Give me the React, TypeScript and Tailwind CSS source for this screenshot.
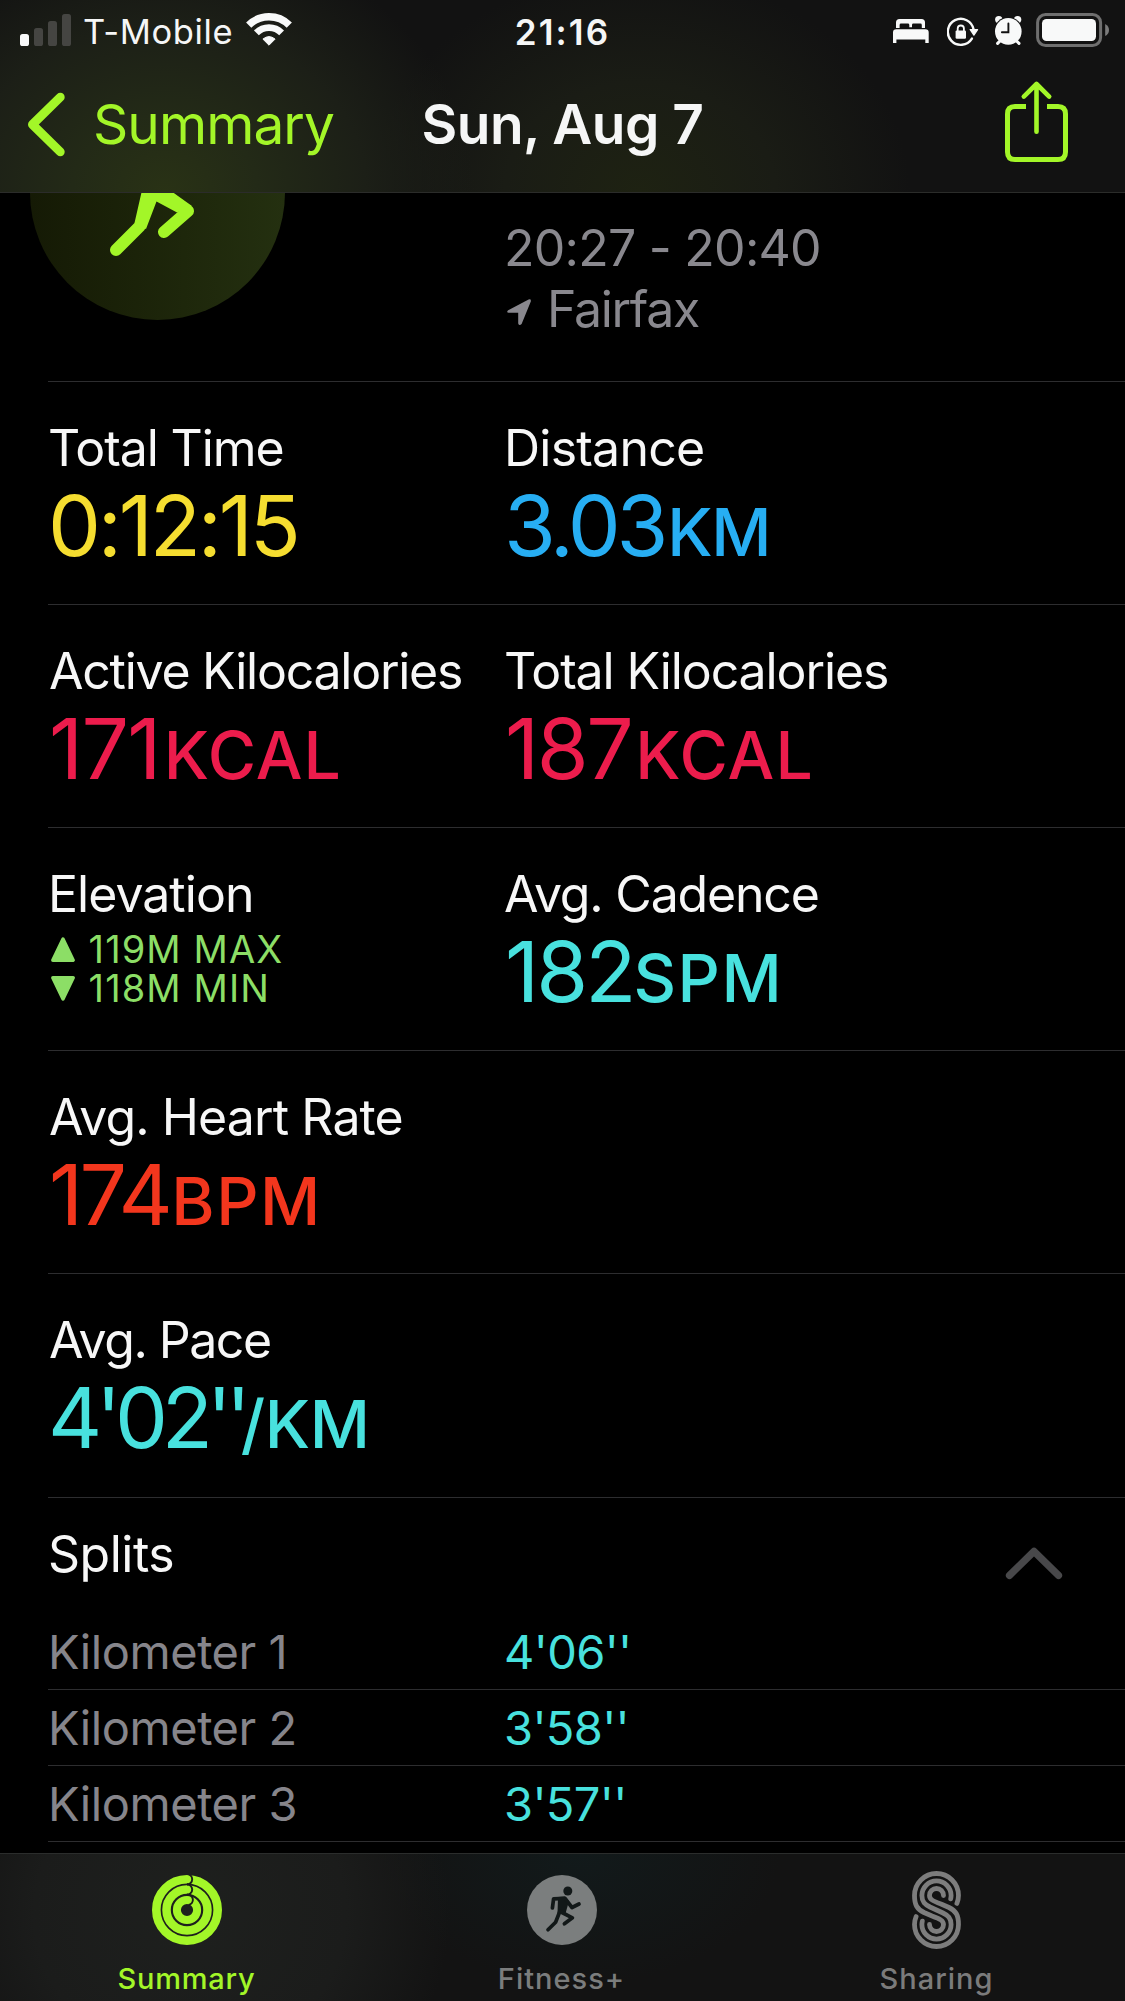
import type { ReactNode } from "react";

interface Metric {
  label: string;
  labelClass: string;
  value: string;
  valueClass: string;
  unit?: string;
  unitClass?: string;
  color: string;
}

const totalTime: Metric = {
  label: "Total Time",
  labelClass: "tracking-[-1.1px] -ml-px",
  value: "0:12:15",
  valueClass: "tracking-[-3.2px] -ml-px",
  color: "text-[#f5dd30]",
};

const distance: Metric = {
  label: "Distance",
  labelClass: "tracking-[-0.77px]",
  value: "3.03",
  valueClass: "tracking-[-4.2px]",
  unit: "KM",
  unitClass: "tracking-[-1.2px] ml-[3px]",
  color: "text-[#27aef3]",
};

const activeKcal: Metric = {
  label: "Active Kilocalories",
  labelClass: "tracking-[-1.25px]",
  value: "171",
  valueClass: "tracking-[-1.7px]",
  unit: "KCAL",
  unitClass: "tracking-[0.95px] ml-1",
  color: "text-[#ec1c4c]",
};

const totalKcal: Metric = {
  label: "Total Kilocalories",
  labelClass: "tracking-[-1.11px]",
  value: "187",
  valueClass: "tracking-[-2.5px] ml-px",
  unit: "KCAL",
  unitClass: "tracking-[1.2px] ml-1",
  color: "text-[#ec1c4c]",
};

const cadence: Metric = {
  label: "Avg. Cadence",
  labelClass: "tracking-[-1.2px]",
  value: "182",
  valueClass: "tracking-[-3px] ml-px",
  unit: "SPM",
  unitClass: "tracking-[1.6px]",
  color: "text-[#48e1de]",
};

const heartRate: Metric = {
  label: "Avg. Heart Rate",
  labelClass: "tracking-[-0.9px]",
  value: "174",
  valueClass: "tracking-[-3.6px]",
  unit: "BPM",
  unitClass: "tracking-[1.5px] ml-0.5",
  color: "text-[#f3361d]",
};

const pace: Metric = {
  label: "Avg. Pace",
  labelClass: "tracking-[-1.5px]",
  value: "4'02''",
  valueClass: "tracking-[-6.2px] -ml-px",
  unit: "/KM",
  unitClass: "tracking-[-0.4px] -ml-1",
  color: "text-[#48e1de]",
};

const splits = [
  { name: "Kilometer 1", time: "4'06''" },
  { name: "Kilometer 2", time: "3'58''" },
  { name: "Kilometer 3", time: "3'57''" },
];

function StatusBar() {
  return (
    <div className="h-[63px] grid grid-cols-[1fr_auto_1fr] items-center text-[#f5f6f6]">
      <div className="flex items-center pl-5">
        <svg className="w-[51px] h-[63px]" viewBox="20 0 51 63">
          <rect x="20" y="34" width="9" height="12" rx="2.6" fill="#f8f9f9" />
          <g fill="#454542">
            <rect x="34" y="28" width="9" height="18" rx="2.6" />
            <rect x="48" y="21" width="9" height="25" rx="2.6" />
            <rect x="62" y="14" width="9" height="32" rx="2.6" />
          </g>
        </svg>
        <span className="ml-3 text-[34.5px] leading-10 tracking-[0.6px] whitespace-nowrap">
          T-Mobile
        </span>
        <svg className="ml-[13px] w-[46px] h-[63px]" viewBox="246 0 46 63" fill="none" stroke="#f8f9f9">
          <path d="M248.7 25.1A28.8 28.8 0 0 1 289.3 25.1" strokeWidth="7.4" />
          <path d="M256.4 32.9A17.8 17.8 0 0 1 281.6 32.9" strokeWidth="6.8" />
          <path d="M269 45.2L262.9 39.1Q269 34.1 275.1 39.1Z" fill="#f8f9f9" strokeWidth="1" strokeLinejoin="round" />
        </svg>
      </div>

      <span className="text-[35px] leading-10 font-semibold tracking-[2.1px]">21:16</span>

      <div className="flex items-center justify-end pr-4">
        {/* Sleep focus */}
        <svg className="w-9 h-[63px]" viewBox="893 0 36 63" fill="#f8f9f9">
          <path d="M896 28V22.5Q896 19 899.5 19H921.5Q925 19 925 22.5V28H921.8V25Q921.8 23.6 920.4 23.6H913.4Q912 23.6 912 25V27.2H909.3V25Q909.3 23.6 907.9 23.6H901Q899.6 23.6 899.6 25V28Z" />
          <path d="M893 43V32.6Q893 29.3 896.3 29.3H925.4Q928.7 29.3 928.7 32.6V43H925.3V39.6H896.4V43Z" />
        </svg>
        {/* Rotation lock */}
        <svg className="ml-[18px] w-8 h-[63px]" viewBox="947 0 32 63">
          <path
            d="M971.9 38.6A13 13 0 1 1 973.6 29.5"
            fill="none"
            stroke="#f8f9f9"
            strokeWidth="2.4"
            strokeLinecap="round"
          />
          <path d="M970.2 29.6H977.6L973.9 35.2Z" fill="#f8f9f9" stroke="#f8f9f9" strokeWidth="1.2" strokeLinejoin="round" />
          <rect x="955.6" y="30.4" width="10.4" height="8.4" rx="1.2" fill="#f8f9f9" />
          <path d="M957.7 31.5V28.6A3.1 3.1 0 0 1 963.9 28.6V31.5" fill="none" stroke="#f8f9f9" strokeWidth="1.8" />
        </svg>
        {/* Alarm */}
        <svg className="ml-[15px] w-[29px] h-[63px]" viewBox="994 0 29 63">
          <circle cx="998.8" cy="19.6" r="3.7" fill="#f8f9f9" />
          <circle cx="1017.6" cy="19.6" r="3.7" fill="#f8f9f9" />
          <circle cx="1008.3" cy="31.4" r="14.3" fill="#121212" />
          <circle cx="1008.3" cy="31.4" r="13.3" fill="#f8f9f9" />
          <path d="M1001 40L997.6 43.4M1015.6 40L1019 43.4" stroke="#f8f9f9" strokeWidth="3" strokeLinecap="round" />
          <path d="M1008.4 23.5V32.2H1001.9" fill="none" stroke="#121212" strokeWidth="1.9" strokeLinecap="round" />
        </svg>
        {/* Battery */}
        <svg className="ml-[13px] w-[73px] h-[63px]" viewBox="1036 0 73 63">
          <rect x="1037.6" y="14.5" width="63" height="31" rx="8" fill="none" stroke="#6f6f6f" strokeWidth="3" />
          <rect x="1042" y="19" width="54" height="22" rx="4.5" fill="#f8f9f9" />
          <path d="M1105.2 24Q1109 26 1109 30T1105.2 36Z" fill="#7b7b7b" />
        </svg>
      </div>
    </div>
  );
}

function NavBar() {
  return (
    <div className="h-[122px] grid grid-cols-[1fr_auto_1fr] items-center">
      <div className="flex items-center pl-7 text-[#a3f628]">
        <svg
          className="w-[38px] h-[122px]"
          viewBox="28 63 38 122"
          fill="none"
          stroke="currentColor"
          strokeWidth="8.8"
          strokeLinecap="round"
          strokeLinejoin="round"
        >
          <path d="M60.3 97.2L32.4 124.5L60.3 151.8" />
        </svg>
        <span className="ml-[27px] text-[55px] leading-[64px] tracking-[-0.94px]">Summary</span>
      </div>

      <h1 className="text-[55px] leading-[64px] font-semibold tracking-[-0.5px] text-[#f5f6f6] whitespace-nowrap">
        Sun, Aug 7
      </h1>

      <div className="flex justify-end pr-[57px]">
        <svg
          className="w-[63px] h-[122px]"
          viewBox="1005 63 63 122"
          fill="none"
          stroke="#a3f628"
          strokeWidth="5"
        >
          <path d="M1026 106.5H1015Q1007.5 106.5 1007.5 114V152Q1007.5 159.5 1015 159.5H1058Q1065.5 159.5 1065.5 152V114Q1065.5 106.5 1058 106.5H1047" />
          <path d="M1036.5 85V131.8M1023.8 96.6L1036.5 84L1049.2 96.6" strokeWidth="4.6" strokeLinecap="round" strokeLinejoin="round" />
        </svg>
      </div>
    </div>
  );
}

function MetricCell({ metric }: { metric: Metric }) {
  return (
    <div className="whitespace-nowrap">
      <div className={`text-[50px] leading-[60px] text-[#f7f7f7] ${metric.labelClass}`}>
        {metric.label}
      </div>
      <div className={`mt-1.5 flex items-baseline leading-[84px] ${metric.color}`}>
        <span className={`text-[84px] ${metric.valueClass}`}>{metric.value}</span>
        {metric.unit && (
          <span className={`text-[66px] font-medium ${metric.unitClass}`}>{metric.unit}</span>
        )}
      </div>
    </div>
  );
}

function MetricRow({ children }: { children: ReactNode }) {
  return (
    <div className="ml-12 h-[223px] border-t border-[#2d2d2f] pt-9 pl-px grid grid-cols-[455px_1fr] items-start">
      {children}
    </div>
  );
}

function ElevationCell() {
  return (
    <div className="whitespace-nowrap">
      <div className="text-[50px] leading-[60px] tracking-[-0.98px] -ml-px text-[#f7f7f7]">Elevation</div>
      <div className="mt-1.5 text-[38px] leading-[39px] tracking-[1.1px] text-[#8cde66]">
        <div className="flex items-center pl-0.5 gap-[13.6px]">
          <svg className="w-6 h-[25px]" viewBox="0 0 24 25" fill="currentColor" stroke="currentColor" strokeWidth="3.4" strokeLinejoin="round">
            <path d="M12 2L22.2 23.2H1.8Z" />
          </svg>
          119M MAX
        </div>
        <div className="flex items-center pl-0.5 gap-[13.6px]">
          <svg className="w-6 h-[25px]" viewBox="0 0 24 25" fill="currentColor" stroke="currentColor" strokeWidth="3.4" strokeLinejoin="round">
            <path d="M12 23L22.2 1.8H1.8Z" />
          </svg>
          118M MIN
        </div>
      </div>
    </div>
  );
}

function RingsIcon() {
  return (
    <svg className="w-[70px] h-[70px]" viewBox="0 0 70 70" fill="none" stroke="#a3f628">
      <circle cx="35" cy="35" r="30.7" strokeWidth="8.6" />
      <circle cx="35" cy="35" r="20.5" strokeWidth="8.5" />
      <circle cx="35" cy="35" r="10.1" strokeWidth="8" />
      <g stroke="#1c1e1b" strokeWidth="1.9">
        <path d="M35 -0.9A5.2 5.2 0 0 1 35 9.5" />
        <path d="M35 9.3A5.2 5.2 0 0 1 35 19.7" />
        <path d="M35 19.8A5.1 5.1 0 0 1 36.5 30" />
      </g>
    </svg>
  );
}

function FitnessIcon() {
  return (
    <svg className="w-[70px] h-[70px]" viewBox="0 0 70 70">
      <circle cx="35" cy="35" r="35" fill="#7b7e7e" />
      <circle cx="40.8" cy="16" r="4.5" fill="#121818" />
      <path d="M31 22L38 21.6L42 26L38.5 38.5L30.5 38Z" fill="#121818" />
      <g fill="none" stroke="#121818" strokeWidth="3.7" strokeLinecap="round" strokeLinejoin="round">
        <path d="M25.4 33L26.6 23.8L38 23.4L45 32.5L52 29" />
        <path d="M33 36L28.6 47.2L21 54.8" />
        <path d="M35 37.5L45.4 42.8L37.4 48.8" />
      </g>
    </svg>
  );
}

function SharingIcon() {
  return (
    <svg
      className="w-[49px] h-[78px]"
      viewBox="0 0 49 78"
      fill="none"
      stroke="#7d7d7d"
      strokeWidth="4.8"
      strokeLinecap="round"
    >
      <path d="M44.9 32.4Q46.5 28.5 46.5 24.5A22 22 0 0 0 2.5 24.5C2.5 34 5 38 12 41.5L20 45C28 48 31.5 49.5 31.5 53.5A7 7 0 0 1 17.5 53.5" />
      <path d="M38.7 27.8Q39.1 26 39.1 24.5A14.6 14.6 0 0 0 9.9 24.5C9.9 31 13 33.5 18 36L31 42C36 44.5 39.1 47 39.1 53.5A14.6 14.6 0 0 1 9.9 53.5Q9.9 52 10.3 50.2" />
      <path d="M31.5 24.5A7 7 0 0 0 17.5 24.5C17.5 28.5 21 30 29 33L37 36.5C44 40 46.5 44 46.5 53.5A22 22 0 0 1 2.5 53.5Q2.5 49.5 4.1 45.6" />
    </svg>
  );
}

function Tab({ icon, label, className }: { icon: ReactNode; label: string; className: string }) {
  return (
    <div className={`flex-1 flex flex-col items-center ${className}`}>
      <div className="h-[78px] flex items-center">{icon}</div>
      <span className="mt-3 text-[29px] leading-9 font-medium">{label}</span>
    </div>
  );
}

export default function App() {
  return (
    <div className="w-[1125px] h-[2001px] overflow-hidden bg-black flex flex-col font-['Inter',sans-serif]">
      <header className="h-[193px] shrink-0 border-b border-[#2b2c2a] bg-[#121212] bg-[radial-gradient(ellipse_310px_260px_at_165px_192px,#293215_0%,#232a17_30%,#1c1f17_65%,#12121200_100%),radial-gradient(ellipse_270px_220px_at_640px_192px,#1e2212_0%,#1a1c15_50%,#12121200_100%)]">
        <StatusBar />
        <NavBar />
      </header>

      {/* Workout header, partly scrolled under the nav bar */}
      <section className="h-[188px] shrink-0 overflow-hidden flex items-start pl-[30px]">
        <div className="-mt-32 w-[255px] h-[255px] shrink-0 rounded-full bg-linear-to-r from-[#151a05] to-[#243010]">
          <svg className="w-full h-full" viewBox="30 65 255 255">
            <path d="M142.5 188L134.5 223L146 229L156.5 201.5L177 212.5L192 206L171 191L168 186Z" fill="#a3f628" />
            <path d="M116 250L140 226M188 211L164 232" stroke="#a3f628" strokeWidth="12" strokeLinecap="round" />
          </svg>
        </div>
        <div className="pt-[25px] ml-[219px] text-[50px] leading-[61px] text-[#89888e] whitespace-nowrap">
          <div className="tracking-[-0.75px]">20:27 - 20:40</div>
          <div className="flex items-center tracking-[-1.31px]">
            <svg className="ml-[3px] mt-1 mr-4 w-6 h-[26px]" viewBox="0 0 24 26" fill="currentColor">
              <path d="M1.2 11.2L21.6 0.4Q24.4 -0.4 23.8 2.6L14.6 25Q12.2 27.2 11.2 24.4V13.8H1.6Q-1 13 1.2 11.2Z" />
            </svg>
            Fairfax
          </div>
        </div>
      </section>

      <section className="shrink-0 h-[1116px]">
        <MetricRow>
          <MetricCell metric={totalTime} />
          <MetricCell metric={distance} />
        </MetricRow>
        <MetricRow>
          <MetricCell metric={activeKcal} />
          <MetricCell metric={totalKcal} />
        </MetricRow>
        <MetricRow>
          <ElevationCell />
          <MetricCell metric={cadence} />
        </MetricRow>
        <MetricRow>
          <MetricCell metric={heartRate} />
        </MetricRow>
        <MetricRow>
          <MetricCell metric={pace} />
        </MetricRow>
      </section>

      {/* Splits */}
      <section className="shrink-0 h-[356px]">
        <div className="ml-12 h-[117px] border-t border-[#2d2d2f] pt-[26px] pr-[62px] flex items-start justify-between">
          <h2 className="text-[50px] leading-[60px] tracking-[-0.5px] text-[#f7f7f7]">Splits</h2>
          <svg
            className="mt-[22px] w-[58px] h-[34px]"
            viewBox="0 0 58 34"
            fill="none"
            stroke="#48484a"
            strokeWidth="7.2"
            strokeLinecap="round"
            strokeLinejoin="round"
          >
            <path d="M4.5 29.4L29 5.4L53.5 29.4" />
          </svg>
        </div>
        {splits.map((split) => (
          <div
            key={split.name}
            className="ml-12 h-[76px] border-b border-[#2d2d2f] pt-2 grid grid-cols-[456px_1fr] text-[47px] leading-[60px] text-[#86858b]"
          >
            <span className="tracking-[-0.45px]">{split.name}</span>
            <span className="tracking-[-0.65px] text-[#48e1de]">{split.time}</span>
          </div>
        ))}
      </section>

      <nav className="flex-1 border-t border-[#2b2d2c] pt-[17px] flex bg-[#131313] bg-[radial-gradient(ellipse_260px_240px_at_190px_60px,#1e201e_0%,#1b1c1b_60%,#13131300_100%),radial-gradient(ellipse_200px_130px_at_580px_0px,#121a1b_0%,#13131300_100%)]">
        <Tab icon={<RingsIcon />} label="Summary" className="text-[#a3f628] tracking-[0.81px] -ml-px mr-px" />
        <Tab icon={<FitnessIcon />} label="Fitness+" className="text-[#7b7d7d] tracking-[1px] -ml-px mr-px" />
        <Tab icon={<SharingIcon />} label="Sharing" className="text-[#7b7b7b] tracking-[1px] -ml-px mr-px" />
      </nav>
    </div>
  );
}
